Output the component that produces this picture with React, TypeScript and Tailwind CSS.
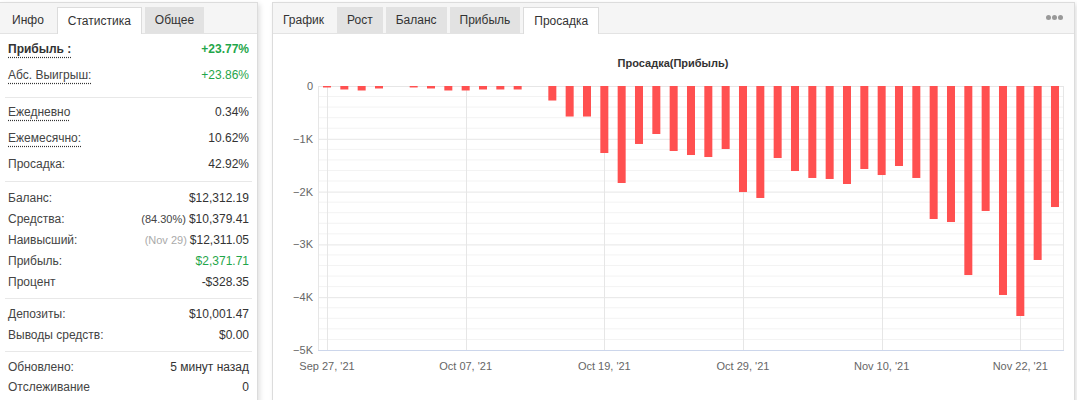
import React from "react";

const FONT = { fontFamily: '"Liberation Sans", Arial, sans-serif' };

// drawdown per trading day, in dollars
const DRAWDOWN = [
  -28, -66, -85, -47, 0, -28, -47, -85, -85, -66, -66, -66, 0, -275, -578, -578,
  -1269, -1837, -1098, -909, -1231, -1307, -1345, -1193, -2008, -2121, -1364, -1610,
  -1742, -1761, -1856, -1572, -1686, -1515, -1742, -2519, -2576, -3580, -2367, -3958,
  -4356, -3295, -2292,
];

const X_LABELS: [number, string][] = [
  [0, "Sep 27, '21"],
  [8, "Oct 07, '21"],
  [16, "Oct 19, '21"],
  [24, "Oct 29, '21"],
  [32, "Nov 10, '21"],
  [40, "Nov 22, '21"],
];

type Row = { label: string; value: React.ReactNode; dotted?: boolean; bold?: boolean; green?: boolean; note?: string; noteLight?: boolean };

const tabBase = "h-[26px] px-[10px] mr-[3px] flex items-center text-[12px] text-[#333]";

function Tabs({ items, active, first = "pl-[12px]" }: { items: string[]; active: number; first?: string }) {
  return (
    <div className="flex items-end h-full">
      {items.map((t, i) => (
        <div
          key={t}
          className={
            i === active
              ? `${tabBase} bg-white border border-b-0 border-[#dcdcdc] -mb-px h-[27px]`
              : i === 0
              ? `${tabBase} ${first} bg-[#f5f5f5]`
              : `${tabBase} bg-[#e2e2e2]`
          }
        >
          {t}
        </div>
      ))}
    </div>
  );
}

function StatRow({ r, h }: { r: Row; h: string }) {
  return (
    <div className={`flex items-center justify-between px-[3px] ${h}`}>
      <span
        className={`${r.bold ? "font-bold text-[#333]" : "text-[#444]"} ${
          r.dotted ? "underline decoration-dotted underline-offset-[4px] decoration-[#333]" : ""
        }`}
      >
        {r.label}
      </span>
      <span className={`${r.green ? "text-[#1fa64a]" : "text-[#333]"} ${r.bold ? "font-bold" : ""}`}>
        {r.note && (
          <span className={`text-[11px] mr-[3px] ${r.noteLight ? "text-[#aaa]" : "text-[#444]"}`}>{r.note}</span>
        )}
        {r.value}
      </span>
    </div>
  );
}

function DrawdownChart() {
  const top = 52;
  const perK = 52.8;
  const left = 45;
  const right = 790;
  const x0 = 54;
  const step = 17.333;
  const y = (v: number) => top - (v / 1000) * perK;

  const minor: number[] = [];
  for (let k = 0; k < 5; k++) for (let m = 1; m < 5; m++) minor.push(top + k * perK + (m * perK) / 5);

  return (
    <svg width="800" height="366" style={FONT}>
      <text x="400" y="33" textAnchor="middle" fontSize="11" fontWeight="bold" fill="#333">
        Просадка(Прибыль)
      </text>
      {minor.map((my) => (
        <line key={my} x1={left} x2={right} y1={my} y2={my} stroke="#f3f3f3" />
      ))}
      {[0, 1, 2, 3, 4].map((k) => (
        <line key={k} x1={left} x2={right} y1={top + k * perK + 0.5} y2={top + k * perK + 0.5} stroke="#e6e6e6" />
      ))}
      <line x1={left + 0.5} x2={left + 0.5} y1={top} y2={top + 5 * perK} stroke="#e6e6e6" />
      <line x1={right + 0.5} x2={right + 0.5} y1={top} y2={top + 5 * perK} stroke="#e6e6e6" />
      {X_LABELS.map(([i]) => (
        <line key={i} x1={Math.round(x0 + i * step) + 0.5} x2={Math.round(x0 + i * step) + 0.5} y1={top} y2={top + 5 * perK} stroke="#e6e6e6" />
      ))}
      <line x1={left} x2={right + 1} y1={top + 5 * perK + 0.5} y2={top + 5 * perK + 0.5} stroke="#ccd6eb" />
      {DRAWDOWN.map((v, i) =>
        v === 0 ? null : (
          <rect
            key={i}
            x={x0 + i * step - 4}
            y={top}
            width="8"
            height={y(v) - top}
            fill="#ff4a4a"
            fillOpacity="0.97"
          />
        )
      )}
      {["0", "−1K", "−2K", "−3K", "−4K", "−5K"].map((t, k) => (
        <text key={t} x="40" y={top + k * perK + 4} textAnchor="end" fontSize="11" fill="#666">
          {t}
        </text>
      ))}
      {X_LABELS.map(([i, t]) => (
        <text key={t} x={x0 + i * step} y="336" textAnchor="middle" fontSize="11" fill="#666">
          {t}
        </text>
      ))}
    </svg>
  );
}

export default function App() {
  const s1: Row[] = [
    { label: "Прибыль :", value: "+23.77%", dotted: true, bold: true, green: true },
    { label: "Абс. Выигрыш:", value: "+23.86%", dotted: true, green: true },
  ];
  const s2: Row[] = [
    { label: "Ежедневно", value: "0.34%", dotted: true },
    { label: "Ежемесячно:", value: "10.62%", dotted: true },
    { label: "Просадка:", value: "42.92%" },
  ];
  const s3: Row[] = [
    { label: "Баланс:", value: "$12,312.19" },
    { label: "Средства:", value: "$10,379.41", note: "(84.30%)" },
    { label: "Наивысший:", value: "$12,311.05", note: "(Nov 29)", noteLight: true },
    { label: "Прибыль:", value: "$2,371.71", green: true },
    { label: "Процент", value: "-$328.35" },
  ];
  const s4: Row[] = [
    { label: "Депозиты:", value: "$10,001.47" },
    { label: "Выводы средств:", value: "$0.00" },
  ];
  const s5: Row[] = [
    { label: "Обновлено:", value: "5 минут назад" },
    { label: "Отслеживание", value: "0" },
  ];

  return (
    <div className="h-[400px] w-[1077px] overflow-hidden bg-white flex items-start text-[12px]" style={FONT}>
      <div className="mt-[2px] w-[258px] h-[420px] shrink-0 border border-l-0 border-[#dcdcdc] bg-white shadow-[2px_2px_5px_rgba(0,0,0,0.12)]">
        <div className="h-[31px] bg-[#f5f5f5] border-b border-[#e3e3e3]">
          <Tabs items={["Инфо", "Статистика", "Общее"]} active={1} />
        </div>
        <div className="px-[5px]">
          <div className="pt-[2px] pb-[9px]">
            {s1.map((r) => <StatRow key={r.label} r={r} h="h-[26px]" />)}
          </div>
          <div className="border-t border-[#e8e8e8] pt-[1px] pb-[4px]">
            {s2.map((r) => <StatRow key={r.label} r={r} h="h-[26px]" />)}
          </div>
          <div className="border-t border-[#e8e8e8] pt-[5px] pb-[6px]">
            {s3.map((r) => <StatRow key={r.label} r={r} h="h-[21px]" />)}
          </div>
          <div className="border-t border-[#e8e8e8] pt-[4px] pb-[6px]">
            {s4.map((r) => <StatRow key={r.label} r={r} h="h-[21px]" />)}
          </div>
          <div className="border-t border-[#e8e8e8] pt-[5px]">
            {s5.map((r) => <StatRow key={r.label} r={r} h="h-[20px]" />)}
          </div>
        </div>
      </div>

      <div className="ml-[14px] mt-[2px] w-[803px] h-[420px] shrink-0 border border-[#dcdcdc] bg-white shadow-[2px_2px_5px_rgba(0,0,0,0.12)]">
        <div className="h-[31px] bg-[#f5f5f5] border-b border-[#e3e3e3] flex">
          <Tabs items={["График", "Рост", "Баланс", "Прибыль", "Просадка"]} active={4} first="pl-[10px]" />
          <div className="ml-auto mr-[11px] self-center flex gap-[1px] -mt-[1px]">
            <span className="w-[5px] h-[5px] rounded-full bg-[#999]" />
            <span className="w-[5px] h-[5px] rounded-full bg-[#999]" />
            <span className="w-[5px] h-[5px] rounded-full bg-[#999]" />
          </div>
        </div>
        <DrawdownChart />
      </div>
    </div>
  );
}
